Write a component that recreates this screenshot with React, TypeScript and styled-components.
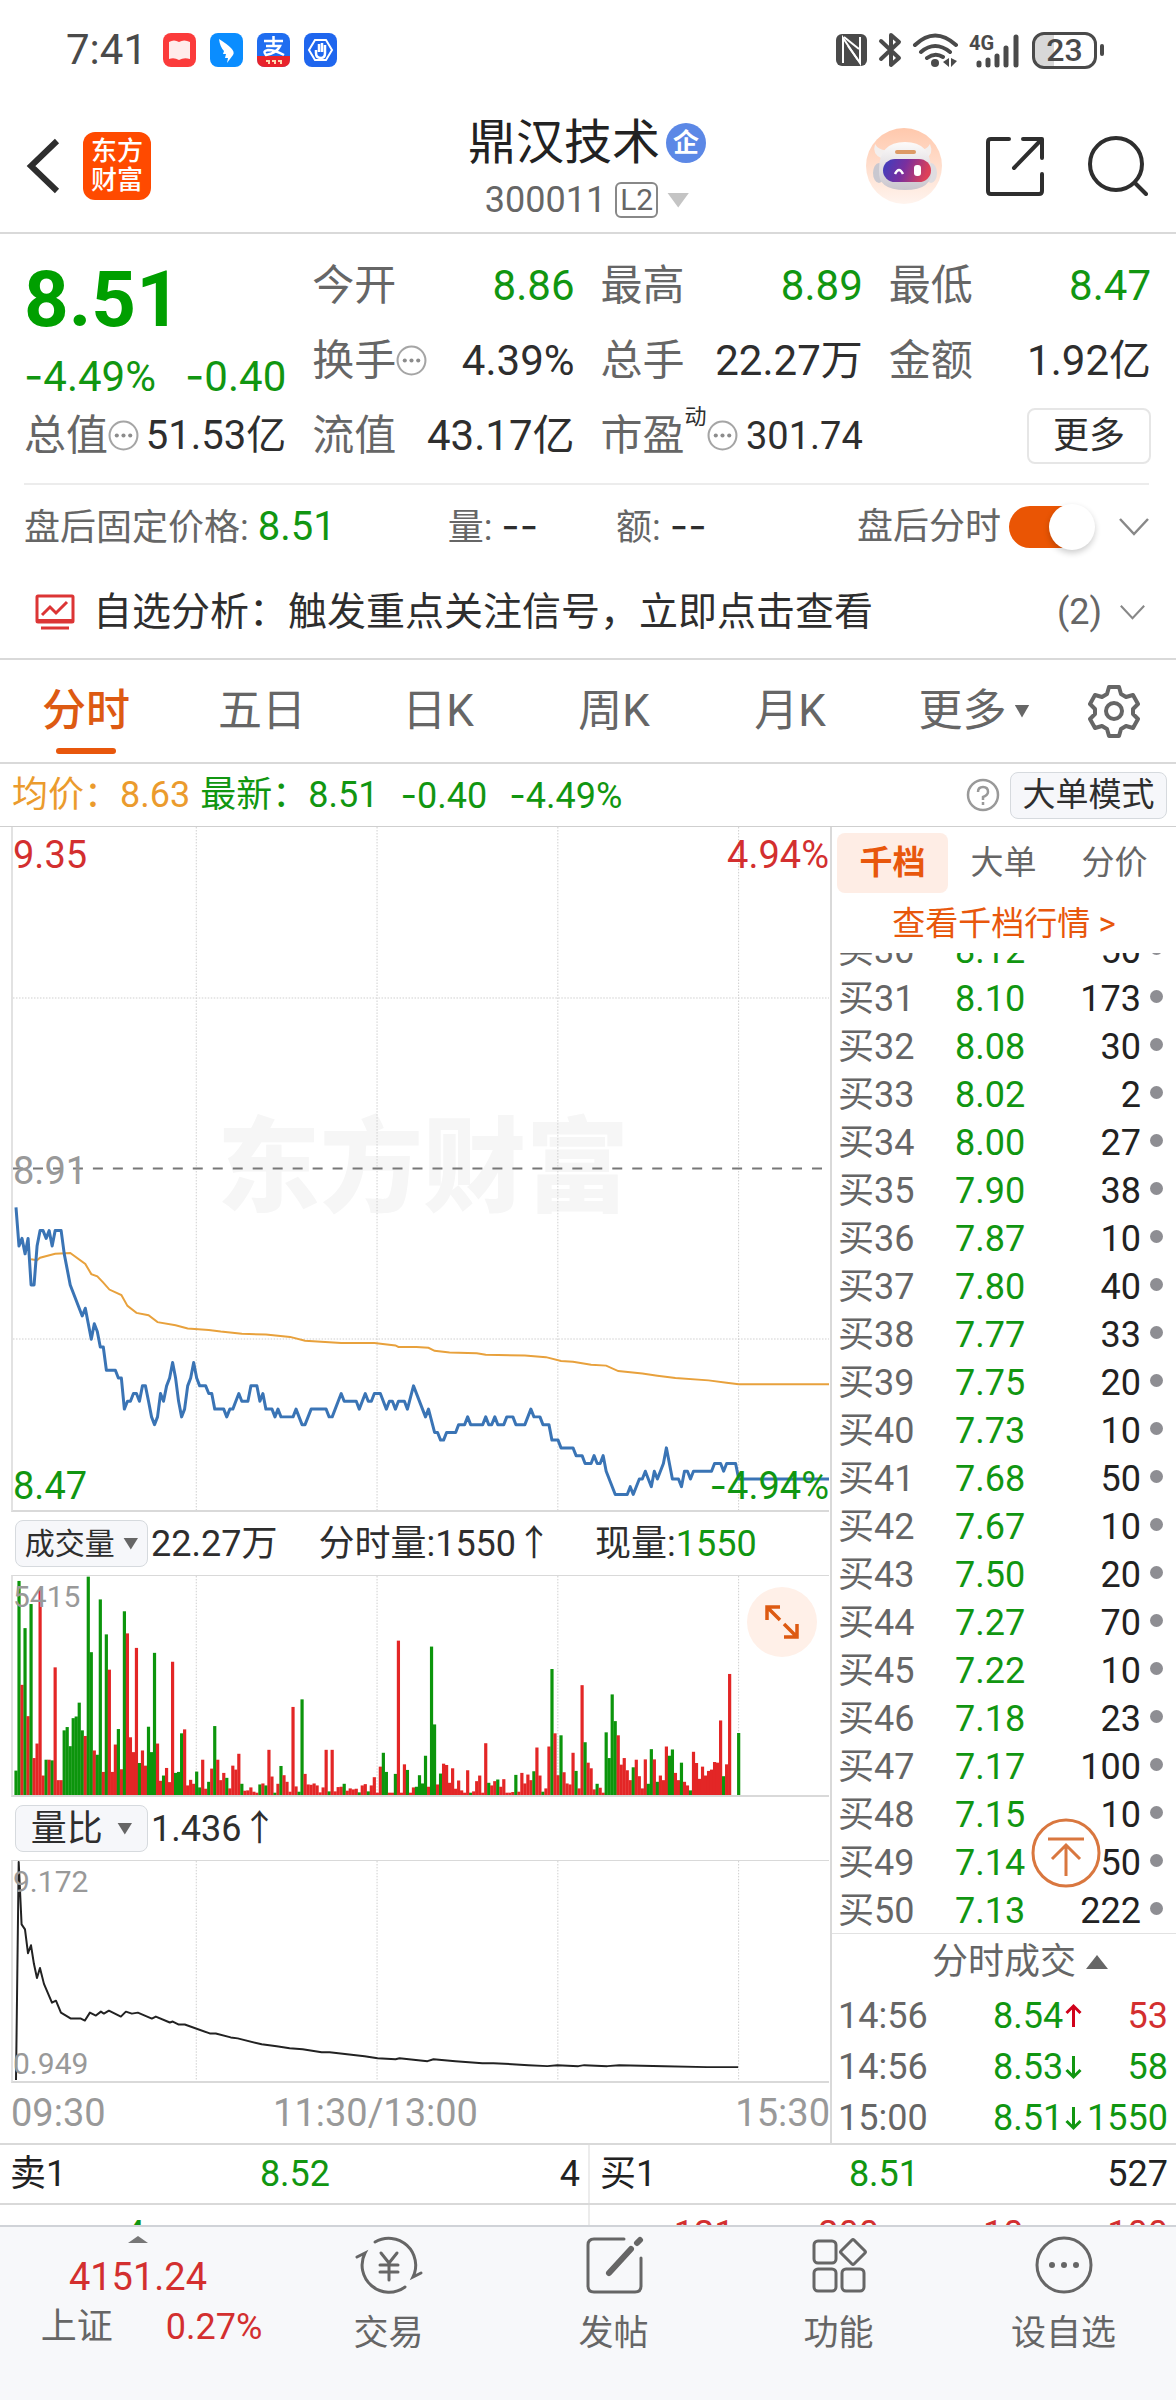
import React from "react";
import styled, { createGlobalStyle, css } from "styled-components";

const C = {
  red: "#d32f2f",
  green: "#119611",
  orange: "#e8570c",
  ink: "#2e2e2e",
  label: "#666666",
  faint: "#999999",
  line: "#d9d9d9",
  soft: "#ececec",
  pale: "#f6f7fa",
};

const GlobalStyle = createGlobalStyle`
  * { box-sizing: border-box; }
  body { margin: 0; background: #fff; }
  button, input { font: inherit; color: inherit; margin: 0; padding: 0; border: 0; background: none; }
  a { color: inherit; text-decoration: none; }
`;

const Page = styled.div`
  font-family: Roboto, "Noto Sans CJK SC", sans-serif;
  font-size: 36px;
  line-height: 48px;
  color: ${C.ink};
  white-space: nowrap;
  overflow: hidden;
`;

const Row = styled.div<{ $gap?: number }>`
  display: flex;
  align-items: center;
  gap: ${(p) => p.$gap ?? 0}px;
`;

const Tone = styled.span<{ $c: string }>`
  color: ${(p) => p.$c};
`;

const Sign = styled.span`
  font-family: Inter, sans-serif;
`;

/* ---------- system status bar ---------- */

const StatusBar = styled.div`
  display: flex;
  align-items: center;
  justify-content: space-between;
  height: 100px;
  padding: 0 72px 0 66px;
  color: #4a4a4a;
`;

const Clock = styled.span`
  font-size: 42px;
  margin-right: 2px;
`;

const Battery = styled.span`
  display: flex;
  align-items: center;
  justify-content: center;
  width: 65px;
  height: 37px;
  border: 3px solid #4a4a4a;
  border-radius: 12px;
  font-size: 32px;
  font-weight: 500;
  background: linear-gradient(90deg, #d8d8d8 32%, #fff 32%);
`;

const Nub = styled.span`
  width: 4px;
  height: 12px;
  border-radius: 2px;
  background: #4a4a4a;
`;

/* ---------- title bar ---------- */

const TitleBar = styled.header`
  display: grid;
  grid-template-columns: 1fr auto 1fr;
  align-items: center;
  height: 134px;
  padding: 0 28px 0 26px;
  border-bottom: 2px solid ${C.line};
`;

const IconButton = styled.button`
  display: flex;
  cursor: pointer;
`;

const Actions = styled.div`
  display: flex;
  align-items: center;
  justify-content: flex-end;
  gap: 44px;
`;

const Brand = styled.div`
  display: flex;
  flex-direction: column;
  align-items: center;
  justify-content: center;
  width: 68px;
  height: 68px;
  border-radius: 12px;
  background: #ff4a00;
  color: #fff;
  font-size: 26px;
  line-height: 29px;
  font-weight: 500;
`;

const Title = styled.div`
  padding-top: 5px;
`;

const Name = styled.h1`
  margin: 0;
  font-size: 48px;
  line-height: 60px;
  font-weight: 400;
  color: #222;
`;

const Code = styled.div`
  display: flex;
  align-items: center;
  justify-content: center;
  gap: 9px;
  margin-top: 3px;
  color: ${C.label};
`;

const Badge = styled.span`
  display: flex;
  align-items: center;
  justify-content: center;
  width: 40px;
  height: 40px;
  border-radius: 50%;
  background: #5c88e6;
  color: #fff;
  font-size: 26px;
  font-weight: 700;
`;

const Level = styled.span`
  padding: 0 3px;
  border: 2px solid #888;
  border-radius: 6px;
  font-size: 30px;
  line-height: 32px;
`;

const Triangle = styled.i<{ $w: number; $h: number; $c: string; $up?: boolean }>`
  flex: none;
  width: ${(p) => p.$w}px;
  height: ${(p) => p.$h}px;
  background: ${(p) => p.$c};
  clip-path: ${(p) => (p.$up ? "polygon(50% 0, 100% 100%, 0 100%)" : "polygon(0 0, 100% 0, 50% 100%)")};
`;

/* ---------- quote ---------- */

const Quote = styled.section`
  display: grid;
  grid-template-columns: repeat(4, minmax(0, 1fr));
  column-gap: 26px;
  grid-template-rows: 75px 75px 75px;
  padding: 14px 25px 10px 24px;
  font-size: 42px;
`;

const Headline = styled.div`
  grid-row: span 2;
  display: flex;
  flex-direction: column;
  justify-content: space-between;
  padding-bottom: 1px;
  color: ${C.green};
`;

const Price = styled.strong`
  font-size: 78px;
  line-height: 104px;
  font-weight: 700;
  color: #009f00;
`;

const Spread = styled.div`
  display: flex;
  align-items: center;
  justify-content: space-between;
`;

const Small = styled.span<{ $size: number }>`
  font-size: ${(p) => p.$size}px;
`;

const Super = styled.sup`
  align-self: flex-start;
  margin-top: -7px;
  font-size: 22px;
  line-height: 24px;
`;

const MoreButton = styled.button`
  margin-left: auto;
  width: 124px;
  height: 56px;
  border: 2px solid #e6e6e6;
  border-radius: 8px;
  font-size: 36px;
`;

const AfterHours = styled.section`
  display: flex;
  align-items: center;
  height: 86px;
  margin: 0 27px 0 24px;
  border-top: 2px solid ${C.soft};
  color: ${C.label};
`;

const Volume = styled.span`
  margin: 0 78px 0 112px;
`;

const Controls = styled.div`
  display: flex;
  align-items: center;
  gap: 26px;
  margin-left: auto;
`;

const Big = styled.span<{ $c?: string }>`
  font-size: 40px;
  color: ${(p) => p.$c ?? C.ink};
`;

const Switch = styled.input`
  appearance: none;
  position: relative;
  width: 84px;
  height: 42px;
  border-radius: 21px;
  background: #ea5504;
  &::before {
    content: "";
    position: absolute;
    right: -2px;
    top: -2px;
    width: 46px;
    height: 46px;
    border-radius: 50%;
    background: #fff;
    box-shadow: 0 3px 6px rgba(0, 0, 0, 0.2);
  }
`;

const SwitchLabel = styled.label`
  display: flex;
  align-items: center;
  gap: 8px;
`;

const Analysis = styled.section`
  display: flex;
  align-items: center;
  gap: 18px;
  height: 91px;
  padding: 0 31px 3px 35px;
  border-bottom: 2px solid ${C.line};
  font-size: 39px;
`;

const Count = styled.span`
  margin-left: auto;
  font-size: 36px;
  color: ${C.label};
`;

/* ---------- period tabs ---------- */

const Tabs = styled.nav`
  display: grid;
  grid-template-columns: repeat(6, 22fr) 15fr;
  height: 104px;
  border-bottom: 2px solid ${C.line};
`;

const Tab = styled.button<{ $on?: boolean; $menu?: boolean }>`
  position: relative;
  display: flex;
  align-items: center;
  justify-content: center;
  gap: 8px;
  padding: ${(p) => (p.$menu ? "0 0 0 12px" : "0 4px 0 0")};
  font-size: 44px;
  font-weight: ${(p) => (p.$on ? 500 : 400)};
  color: ${(p) => (p.$on ? "#dd5a12" : C.label)};
  ${(p) =>
    p.$on &&
    css`
      &::after {
        content: "";
        position: absolute;
        bottom: 8px;
        width: 60px;
        height: 6px;
        border-radius: 3px;
        background: ${C.orange};
      }
    `}
`;

const Averages = styled.div`
  display: flex;
  align-items: center;
  justify-content: space-between;
  height: 63px;
  padding: 0 9px 0 12px;
  border-bottom: 1px solid #cfcfcf;
`;

const Chip = styled.button<{ $w: number; $size: number }>`
  display: flex;
  align-items: center;
  justify-content: space-evenly;
  width: ${(p) => p.$w}px;
  height: 47px;
  border: 1px solid #d6dade;
  border-radius: 8px;
  background: ${C.pale};
  font-size: ${(p) => p.$size}px;
  line-height: 44px;
`;

/* ---------- charts ---------- */

const Main = styled.main`
  display: grid;
  grid-template-columns: minmax(0, 1fr) 346px;
  border-bottom: 2px solid ${C.line};
`;

const Charts = styled.section`
  padding-left: 11px;
`;

const Plot = styled.div<{ $h: number }>`
  position: relative;
  height: ${(p) => p.$h}px;
  margin-right: 1px;
  border-left: 2px solid #e2e2e2;
  border-bottom: 2px solid ${C.line};
  & > svg {
    position: relative;
    display: block;
    width: 100%;
    height: 100%;
  }
`;

const SubPlot = styled(Plot)`
  border-top: 1px solid ${C.line};
`;

const Mark = styled.span<{ $c: string; $v: "top" | "mid" | "low"; $right?: boolean; $sm?: boolean }>`
  position: absolute;
  color: ${(p) => p.$c};
  font-size: ${(p) => (p.$sm ? 30 : 38)}px;
  line-height: ${(p) => (p.$sm ? 38 : 52)}px;
  ${(p) => (p.$right ? "right: 0;" : "left: 0;")}
  ${(p) => p.$v === "top" && "top: 2px;"}
  ${(p) => p.$v === "low" && "bottom: -2px;"}
  ${(p) => p.$v === "mid" && "top: calc(50% - 24px);"}
`;

const Watermark = styled.span`
  position: absolute;
  left: 25%;
  top: 50%;
  transform: translateY(-50%);
  font-size: 103px;
  line-height: 120px;
  font-weight: 900;
  color: #f6f6f6;
`;

const PlotHead = styled.div`
  display: flex;
  align-items: center;
  height: 63px;
  padding-left: 4px;
`;

const Gap = styled.span<{ $w: number }>`
  width: ${(p) => p.$w}px;
`;

const Expand = styled.button`
  position: absolute;
  right: 12px;
  top: 11px;
  display: flex;
  align-items: center;
  justify-content: center;
  width: 70px;
  height: 70px;
  border-radius: 50%;
  background: #fff0e8;
`;

const Axis = styled.div`
  display: grid;
  grid-template-columns: 1fr auto 1fr;
  height: 59px;
  align-items: center;
  font-size: 38px;
  color: ${C.faint};
`;

const AxisMid = styled.span`
  margin-right: 90px;
`;

const AxisEnd = styled.span`
  text-align: right;
`;

/* ---------- order book ---------- */

const Side = styled.aside`
  position: relative;
  display: flex;
  flex-direction: column;
  border-left: 2px solid ${C.line};
`;

const SideTabs = styled.div`
  display: grid;
  grid-template-columns: repeat(3, 1fr);
  padding: 6px 6px 0 5px;
`;

const SideTab = styled.button<{ $on?: boolean }>`
  height: 60px;
  border-radius: 8px;
  font-size: 33px;
  font-weight: ${(p) => (p.$on ? 700 : 400)};
  color: ${(p) => (p.$on ? C.orange : C.label)};
  background: ${(p) => (p.$on ? "#feede5" : "transparent")};
`;

const DepthLink = styled.a`
  height: 60px;
  line-height: 61px;
  text-align: center;
  font-size: 33px;
  color: ${C.orange};
`;

const BookWindow = styled.div`
  height: 980px;
  overflow: hidden;
`;

const Book = styled.table`
  border-collapse: collapse;
  width: 100%;
  margin-top: -26px;
  table-layout: fixed;
  td {
    padding: 0;
    height: 48px;
    line-height: 48px;
  }
`;

const BookLabel = styled.td`
  width: 123px;
  && { padding-left: 6px; }
  color: ${C.label};
`;

const BookVol = styled.td`
  text-align: right;
  color: #222;
`;

const BookDot = styled.td`
  width: 35px;
  &::before {
    content: "";
    display: block;
    width: 13px;
    height: 13px;
    margin: 0 0 5px 9px;
    border-radius: 50%;
    background: #8e8e93;
  }
`;

const ToTop = styled.button`
  position: absolute;
  right: 75px;
  bottom: 255px;
  width: 70px;
  height: 70px;
`;

const TradesTitle = styled.button`
  display: flex;
  align-items: center;
  justify-content: center;
  gap: 10px;
  height: 57px;
  border-top: 1px solid #e2e2e2;
  padding-left: 32px;
  color: ${C.label};
`;

const Trades = styled.table`
  border-collapse: collapse;
  width: 100%;
  table-layout: fixed;
  td {
    padding: 0;
    height: 51px;
  }
`;

const TradeTime = styled.td`
  width: 161px;
  && { padding-left: 6px; }
  color: ${C.label};
`;

const TradePrice = styled.td`
  width: 90px;
  color: ${C.green};
`;

const TradeVol = styled.td<{ $c: string }>`
  && { padding-right: 8px; }
  direction: rtl;
  color: ${(p) => p.$c};
`;

/* ---------- best bid / ask ---------- */

const Best = styled.section`
  display: grid;
  grid-template-columns: 1fr 1fr;
  border-bottom: 2px solid ${C.line};
`;

const BestHalf = styled.div`
  display: grid;
  grid-template-columns: 1fr auto 1fr;
  height: 58px;
  align-items: center;
  padding: 0 8px 0 10px;
  color: #222;
  & + & { border-left: 2px solid ${C.soft}; }
`;

const End = styled.span`
  text-align: right;
`;

const Peek = styled.section`
  display: grid;
  grid-template-columns: 1fr 1fr;
  height: 20px;
  overflow: hidden;
  line-height: 58px;
`;

const PeekHalf = styled.div<{ $c: string }>`
  display: grid;
  grid-template-columns: repeat(4, 1fr);
  padding-right: 8px;
  text-align: right;
  color: ${(p) => p.$c};
  & + & { border-left: 2px solid ${C.soft}; }
`;

/* ---------- bottom bar ---------- */

const Footer = styled.footer`
  display: grid;
  grid-template-columns: 276fr repeat(4, 225fr);
  height: 178px;
  padding-top: 9px;
  border-top: 2px solid #d0d3d8;
  background: #f7f8fa;
`;

const Index = styled.div`
  display: flex;
  flex-direction: column;
  align-items: center;
`;

const IndexValue = styled.span`
  font-size: 38px;
  line-height: 50px;
  margin-top: 9px;
  color: ${C.red};
`;

const IndexLine = styled.div`
  display: flex;
  gap: 53px;
  margin-top: 1px;
  padding-left: 27px;
`;

const FootItem = styled.button`
  display: flex;
  flex-direction: column;
  align-items: center;
  height: 122px;
  justify-content: space-between;
  font-size: 35px;
  color: ${C.label};
`;

/* ---------- data ---------- */

const SLOTS = 271;
const W = 817;
const STEP = W / SLOTS;
const PRICE_H = 685;

/* [minute, price] at each turn of the line */
const PRICE: number[][] = [
  [0, 8.86], [1, 8.81], [2, 8.82], [3, 8.8], [4, 8.82], [5, 8.76], [6, 8.76], [7, 8.81], [8, 8.83], [9, 8.83],
  [10, 8.82], [11, 8.83], [12, 8.81], [13, 8.83], [15, 8.83], [16, 8.8], [18, 8.76], [22, 8.72], [23, 8.73],
  [24, 8.71], [25, 8.69], [26, 8.71], [27, 8.7], [28, 8.68], [29, 8.68], [30, 8.65], [33, 8.65], [34, 8.64],
  [35, 8.64], [36, 8.6], [37, 8.61], [38, 8.61], [39, 8.62], [40, 8.62], [41, 8.61], [42, 8.63], [43, 8.63],
  [44, 8.61], [45, 8.59], [46, 8.58], [47, 8.59], [48, 8.62], [49, 8.61], [50, 8.63], [51, 8.64], [52, 8.66],
  [53, 8.64], [54, 8.61], [55, 8.59], [56, 8.6], [57, 8.63], [58, 8.64], [59, 8.66], [60, 8.64], [61, 8.63],
  [63, 8.63], [64, 8.62], [65, 8.62], [66, 8.6], [69, 8.6], [70, 8.59], [71, 8.6], [72, 8.6], [73, 8.61],
  [74, 8.62], [75, 8.61], [77, 8.61], [78, 8.63], [80, 8.63], [81, 8.61], [82, 8.62], [83, 8.6], [85, 8.6],
  [86, 8.59], [87, 8.6], [88, 8.59], [92, 8.59], [93, 8.6], [95, 8.58], [96, 8.58], [98, 8.6], [103, 8.6],
  [104, 8.59], [105, 8.59], [108, 8.62], [109, 8.61], [113, 8.61], [114, 8.6], [116, 8.62], [117, 8.61],
  [118, 8.61], [119, 8.62], [121, 8.62], [123, 8.6], [124, 8.61], [125, 8.61], [126, 8.6], [127, 8.61],
  [129, 8.61], [130, 8.6], [132, 8.63], [136, 8.59], [137, 8.6], [139, 8.57], [140, 8.57], [141, 8.56],
  [142, 8.56], [143, 8.57], [146, 8.57], [147, 8.58], [149, 8.58], [150, 8.59], [151, 8.58], [155, 8.58],
  [156, 8.59], [157, 8.58], [158, 8.58], [159, 8.59], [160, 8.58], [162, 8.58], [163, 8.59], [165, 8.59],
  [166, 8.58], [169, 8.58], [171, 8.6], [172, 8.59], [174, 8.59], [175, 8.58], [177, 8.58], [178, 8.56],
  [180, 8.56], [181, 8.55], [185, 8.55], [186, 8.54], [188, 8.54], [189, 8.53], [191, 8.53], [192, 8.54],
  [193, 8.53], [194, 8.53], [195, 8.54], [196, 8.52], [199, 8.49], [203, 8.49], [204, 8.5], [205, 8.49],
  [207, 8.51], [208, 8.51], [209, 8.52], [211, 8.5], [212, 8.52], [213, 8.51], [215, 8.53], [216, 8.55],
  [218, 8.51], [220, 8.51], [221, 8.5], [222, 8.52], [223, 8.52], [224, 8.51], [225, 8.52], [231, 8.52],
  [232, 8.53], [234, 8.53], [235, 8.52], [236, 8.53], [239, 8.53], [240, 8.51], [270, 8.51],
];

const AVERAGE: number[][] = [
  [5, 8.793], [7, 8.792], [8, 8.795], [13, 8.8], [18, 8.801], [23, 8.787], [25, 8.774], [27, 8.771],
  [29, 8.763], [31, 8.754], [35, 8.747], [37, 8.733], [40, 8.724], [44, 8.721], [47, 8.712], [53, 8.708],
  [57, 8.704], [64, 8.702], [68, 8.7], [75, 8.697], [83, 8.696], [91, 8.693], [96, 8.688], [108, 8.685],
  [119, 8.685], [126, 8.682], [127, 8.68], [133, 8.68], [137, 8.679], [139, 8.675], [144, 8.673],
  [153, 8.672], [156, 8.67], [169, 8.669], [176, 8.667], [181, 8.662], [185, 8.661], [191, 8.657],
  [196, 8.656], [200, 8.649], [208, 8.646], [213, 8.643], [219, 8.64], [230, 8.637], [236, 8.634],
  [240, 8.632], [270, 8.632],
];

/* bar height per minute; negative where the price fell */
const VOLUME_MAX = 664;
const VOLUME = [
  -74, -649, 334, -506, 239, -579, 112, 156, 625, 59, -107, 107, -105, 387, 45, 45, -196, -206, -148, -233,
  -238, -280, -196, 179, -662, -433, 135, -122, -593, 70, -487, 380, 70, 153, -200, 78, -557, 490, 175, 130,
  446, -97, 135, 89, -207, -130, -431, 156, 43, -59, 82, 39, 404, -67, -70, -187, 199, 29, 46, 34,
  -71, -23, 107, 19, -40, 80, -209, 107, 45, 67, -52, 20, 89, 77, 125, -34, 13, 14, 23, 10,
  7, -32, 35, -29, 137, 56, -7, 34, -88, 60, 40, 10, 267, 26, -10, -290, 64, 32, 31, 35,
  29, 8, 23, 137, -11, 137, 11, 24, 25, -34, 13, 20, 17, 19, -8, 29, 33, -11, 29, 54,
  7, 86, -128, -70, 7, 7, -64, 468, 7, 93, -76, 7, 23, -25, -60, -35, -119, 25, -450, -214,
  32, -65, 95, 91, 37, 81, 19, 44, 14, 7, 75, -7, 11, 42, 59, 7, 157, -37, 29, 42,
  -47, 25, 48, 7, 7, 9, -61, 10, 67, 35, 62, 45, -72, 144, 59, -10, 20, 147, -382, 187,
  60, -181, 69, 35, 32, 128, -73, 20, 333, -160, 98, 81, 17, -34, 22, 7, -190, -112, -305, -224,
  181, 92, 112, 75, 45, -84, 107, 57, 20, 108, -34, -139, 108, -40, 59, 45, 147, -119, -138, 67,
  45, -98, 40, 29, -14, 131, 97, 49, 86, 59, 73, 77, 100, 98, 226, -57, 93, 367, 0, 0,
  -188,
];

const RATIO =
  "3,221 5.7,1 8.6,64 12,69 15,93 18,85 21,104 24,118 27,108 31,124 39,143 43,141 48,153 58,159 68,159 72,161 77,153 83,156 88,152 91,154 96,151 108,157 113,152 119,154 125,153 139,159 143,157 157,163 160,162 166,165 172,165 197,174 203,174 218,178 225,179 249,185 264,187 277,189 290,190 309,193 317,193 352,197 365,199 383,200 387,199 415,202 421,200 443,202 470,204 481,204 516,206 535,207 545,206 566,207 572,206 595,207 607,206 652,207 695,208 726,208";

const BIDS: [string, string, string][] = [
  ["买30", "8.12", "50"], ["买31", "8.10", "173"], ["买32", "8.08", "30"], ["买33", "8.02", "2"],
  ["买34", "8.00", "27"], ["买35", "7.90", "38"], ["买36", "7.87", "10"], ["买37", "7.80", "40"],
  ["买38", "7.77", "33"], ["买39", "7.75", "20"], ["买40", "7.73", "10"], ["买41", "7.68", "50"],
  ["买42", "7.67", "10"], ["买43", "7.50", "20"], ["买44", "7.27", "70"], ["买45", "7.22", "10"],
  ["买46", "7.18", "23"], ["买47", "7.17", "100"], ["买48", "7.15", "10"], ["买49", "7.14", "50"],
  ["买50", "7.13", "222"],
];

const TRADES = [
  { time: "14:56", price: "8.54", up: true, vol: "53" },
  { time: "14:56", price: "8.53", up: false, vol: "58" },
  { time: "15:00", price: "8.51", up: false, vol: "1550" },
];

const toPoints = (series: number[][]) =>
  series.map(([m, p]) => `${((m + 1) * STEP).toFixed(1)},${(((9.35 - p) / 0.88) * PRICE_H).toFixed(1)}`).join(" ");

/* ---------- drawings ---------- */

const AppIcons = () => (
  <svg width="174" height="34" viewBox="0 0 174 34" aria-hidden="true">
    <rect width="33" height="34" rx="8" fill="#fb3b3b" />
    <path d="M6 9q5-3 10 0q5-3 11 0v17q-6-2-11 1q-5-3-10-1z" fill="#ffeceb" />
    <rect x="47" width="33" height="34" rx="8" fill="#0a8dff" />
    <path d="M56 6q8 5 12 9q4 4 2 7l-6 8l1-5h-3l1-4h-3l1-3q-4-4-5-12z" fill="#fff" />
    <rect x="94" width="33" height="34" rx="8" fill="#1f6df0" />
    <path d="M94 23h33v3q0 8-8 8h-17q-8 0-8-8z" fill="#e8232b" />
    <path d="M101 8h19M110.500 3v10M103 13h14q-3 7-14 9q-4-4 2-5q7 0 16 5" fill="none" stroke="#fff" strokeWidth="2.500" />
    <path d="M103 28h3v3M109 28h3v3M115 28h3v3" stroke="#ffd9b0" strokeWidth="2" fill="none" />
    <rect x="141" width="33" height="34" rx="8" fill="#1f66ee" />
    <path d="M152 7h11l6 10l-6 10h-11l-6-10z" fill="none" stroke="#fff" strokeWidth="2" />
    <path d="M153 17v3q0 5 5 5q4 0 4-5v-8M156 19v-8M159 19v-9" stroke="#fff" strokeWidth="2.500" fill="none" />
  </svg>
);

const Signals = () => (
  <svg width="186" height="36" viewBox="0 0 186 36" aria-hidden="true" fill="none" stroke="#4a4a4a">
    <rect x="0" y="2" width="31" height="32" rx="6" fill="#4a4a4a" stroke="none" />
    <path d="M7 31V6l17 25V5" stroke="#fff" strokeWidth="2" />
    <path d="M12 14l10 14M8 5l15 12" stroke="#fff" strokeWidth="2" />
    <path d="M45 9l18 17l-8 7V3l8 7l-18 17" strokeWidth="4" strokeLinejoin="round" strokeLinecap="round" />
    <path d="M79 13q20-19 41 0M85 20q14-12 29 0M91 26q8-6 16-1" strokeWidth="4" strokeLinecap="round" />
    <circle cx="99" cy="31" r="4" fill="#4a4a4a" stroke="none" />
    <path d="M113 26v9l-6-5zM115 26v9l6-6z" fill="#4a4a4a" stroke="none" />
    <path d="M143 31v2M152 28v5M161 24v9M170 16v17M180 5v28" strokeWidth="5" strokeLinecap="round" />
    <text x="133" y="18" fontSize="20" fontWeight="700" fill="#4a4a4a" stroke="none" fontFamily="Roboto">4G</text>
  </svg>
);

const Robot = () => (
  <svg width="76" height="76" viewBox="0 0 76 76" aria-hidden="true">
    <defs>
      <linearGradient id="halo" x1="0" y1="0" x2="0" y2="1">
        <stop offset="0" stopColor="#ffc8ac" />
        <stop offset="1" stopColor="#fff4ee" />
      </linearGradient>
      <linearGradient id="visor" x1="0" y1="0" x2="1" y2="0.200">
        <stop offset="0" stopColor="#3a3fc0" />
        <stop offset="0.500" stopColor="#7a2f9e" />
        <stop offset="1" stopColor="#dd4058" />
      </linearGradient>
      <linearGradient id="shell" x1="0" y1="0" x2="0" y2="1">
        <stop offset="0" stopColor="#fdfbfa" />
        <stop offset="1" stopColor="#c9c5cd" />
      </linearGradient>
    </defs>
    <circle cx="38" cy="38" r="38" fill="url(#halo)" />
    <path d="M9 16q-3 10 6 14l7-8q-9 1-13-6zM64 16q4 10-4 14l-8-8q8 1 12-6z" fill="#f3efee" />
    <ellipse cx="13" cy="45" rx="6" ry="10" fill="#c9c8d0" />
    <ellipse cx="65" cy="45" rx="6" ry="10" fill="#dfdce0" />
    <path d="M13 42q0-28 26-28t26 28q2 20-26 20t-26-20z" fill="url(#shell)" />
    <rect x="29" y="22" width="21" height="4" rx="2" fill="#dd9a66" />
    <rect x="17" y="31" width="48" height="23" rx="12" fill="url(#visor)" />
    <path d="M29 46q4-8 8 0" stroke="#fff" strokeWidth="2.500" fill="none" />
    <rect x="48" y="37" width="7" height="11" rx="3" fill="#fff" />
  </svg>
);

const Share = () => (
  <svg width="58" height="60" viewBox="0 0 58 60" fill="none" stroke="#2e2e2e" strokeWidth="4" strokeLinecap="round" strokeLinejoin="round">
    <path d="M23 3H5q-3 0-3 3v49q0 3 3 3h48q3 0 3-3V38M37 3h19v19M55 4L28 32" />
  </svg>
);

const Search = () => (
  <svg width="60" height="60" viewBox="0 0 60 60" fill="none" stroke="#2e2e2e" strokeWidth="4" strokeLinecap="round">
    <circle cx="28" cy="28" r="26" />
    <path d="M47 47l11 11" />
  </svg>
);

const Info = () => (
  <svg width="31" height="31" viewBox="0 0 30 30" aria-hidden="true">
    <circle cx="15" cy="15" r="13.500" fill="none" stroke="#a5a5a5" strokeWidth="2" />
    <g fill="#8c8c8c">
      <circle cx="8.500" cy="15" r="2" />
      <circle cx="15" cy="15" r="2" />
      <circle cx="21.500" cy="15" r="2" />
    </g>
  </svg>
);

const Chevron = ({ w }: { w: number }) => (
  <svg width={w} height={w} viewBox="0 0 30 30" fill="none" stroke="#888" strokeWidth="2.500" aria-hidden="true">
    <path d="M1 7l14 15L29 7" />
  </svg>
);

const AnalysisIcon = () => (
  <svg width="40" height="38" viewBox="0 0 40 38" fill="none" stroke="#dc3535" strokeWidth="3" aria-hidden="true">
    <rect x="2" y="3" width="36" height="26" rx="1" />
    <path d="M7 22l8-8l6 6l11-11M6 35h28" />
    <path d="M2 28h36" strokeWidth="4" />
  </svg>
);

const Gear = () => (
  <svg width="52" height="54" viewBox="0 0 52 54" fill="none" stroke="#666" strokeWidth="4" strokeLinejoin="round">
    <path d="M21 3h10l2 7l5 3l7-2l5 9l-5 5v5l5 5l-5 9l-7-2l-5 3l-2 7H21l-2-7l-5-3l-7 2l-5-9l5-5v-5l-5-5l5-9l7 2l5-3z" />
    <circle cx="26" cy="27" r="8" />
  </svg>
);

const Help = () => (
  <svg width="34" height="34" viewBox="0 0 34 34" fill="none" stroke="#999" strokeWidth="2.500">
    <circle cx="17" cy="17" r="15" />
    <path d="M12 14q0-5 5-5t5 5q0 3-5 5v3M17 24v3" />
  </svg>
);

const Arrow = ({ up }: { up: boolean }) => (
  <svg width="17" height="26" viewBox="0 0 17 26" fill="none" stroke={up ? "#d0021b" : C.green} strokeWidth="3" aria-hidden="true">
    <path d={up ? "M8.500 24V3M1.500 10l7-7l7 7" : "M8.500 2v21M1.500 16l7 7l7-7"} />
  </svg>
);

const Guides = ({ h, rows = [] }: { h: number; rows?: number[] }) => (
  <g stroke="#cfcfcf" strokeWidth="1" strokeDasharray="1.500 1.500">
    {[183, 364, 545, 726].map((x) => (
      <path key={x} d={`M${x}.500 0V${h}`} />
    ))}
    {rows.map((y) => (
      <path key={y} d={`M0 ${y}.500H${W}`} />
    ))}
  </g>
);

const footIcon = { width: 60, height: 58, viewBox: "0 0 60 58", fill: "none", stroke: "#666", strokeWidth: 3 };

const TradeIcon = () => (
  <svg {...footIcon} overflow="visible" strokeLinecap="round">
    <path d="M16 6A27 27 0 0 1 54 41L62 37" />
    <path d="M46 51A27 27 0 0 1 6 17L-2 21" />
    <path d="M22 17l8 10l8-10M30 27v17M21 29h18M21 36h18" />
  </svg>
);

const PostIcon = () => (
  <svg {...footIcon} strokeLinecap="round">
    <path d="M40 3H10q-6 0-6 6v41q0 6 6 6h41q6 0 6-6V22" />
    <path d="M47 13L25 37" strokeWidth="6" />
    <path d="M53 7l3-3" strokeWidth="6" />
  </svg>
);

const GridIcon = () => (
  <svg {...footIcon}>
    <rect x="5" y="5" width="22" height="22" rx="4" />
    <rect x="5" y="33" width="22" height="22" rx="4" />
    <rect x="33" y="33" width="22" height="22" rx="4" />
    <path d="M43 4q1-1 2 0l11 11q1 1 0 2l-11 11q-1 1-2 0l-11-11q-1-1 0-2z" />
  </svg>
);

const DotsIcon = () => (
  <svg {...footIcon}>
    <circle cx="30" cy="29" r="27" />
    <g fill="#666" stroke="none">
      <circle cx="18" cy="29" r="3" />
      <circle cx="30" cy="29" r="3" />
      <circle cx="42" cy="29" r="3" />
    </g>
  </svg>
);

const FOOT = [
  { label: "交易", Icon: TradeIcon },
  { label: "发帖", Icon: PostIcon },
  { label: "功能", Icon: GridIcon },
  { label: "设自选", Icon: DotsIcon },
];

type StatProps = { label: string; value: string; color?: string; info?: boolean };

const Stat = ({ label, value, color = C.ink, info }: StatProps) => (
  <Spread>
    <Row>
      <Tone $c={C.label}>{label}</Tone>
      {info && <Info />}
    </Row>
    <Tone $c={color}>{value}</Tone>
  </Spread>
);

export default function App() {
  return (
    <Page>
      <GlobalStyle />
      <StatusBar>
        <Row $gap={14}>
          <Clock>7:41</Clock>
          <AppIcons />
        </Row>
        <Row $gap={3}>
          <Signals />
          <Gap $w={4} />
          <Battery>23</Battery>
          <Nub />
        </Row>
      </StatusBar>

      <TitleBar>
        <Row $gap={23}>
          <IconButton aria-label="返回">
            <svg width="34" height="56" viewBox="0 0 34 56" fill="none" stroke="#2e2e2e" strokeWidth="6">
              <path d="M31 3L5 28l26 25" />
            </svg>
          </IconButton>
          <Brand>
            <span>东方</span>
            <span>财富</span>
          </Brand>
        </Row>
        <Title>
          <Row $gap={6}>
            <Name>鼎汉技术</Name>
            <Badge>企</Badge>
          </Row>
          <Code>
            <span>300011</span>
            <Level>L2</Level>
            <Triangle $w={22} $h={15} $c="#c4c4c4" />
          </Code>
        </Title>
        <Actions>
          <Robot />
          <IconButton aria-label="分享"><Share /></IconButton>
          <IconButton aria-label="搜索"><Search /></IconButton>
        </Actions>
      </TitleBar>

      <Quote>
        <Headline>
          <Price>8.51</Price>
          <Spread>
            <span><Sign>-</Sign>4.49%</span>
            <span><Sign>-</Sign>0.40</span>
          </Spread>
        </Headline>
        <Stat label="今开" value="8.86" color={C.green} />
        <Stat label="最高" value="8.89" color={C.green} />
        <Stat label="最低" value="8.47" color={C.green} />
        <Stat label="换手" value="4.39%" info />
        <Stat label="总手" value="22.27万" />
        <Stat label="金额" value="1.92亿" />
        <Spread>
          <Row>
            <Tone $c={C.label}>总值</Tone>
            <Info />
          </Row>
          <Small $size={40}>51.53亿</Small>
        </Spread>
        <Stat label="流值" value="43.17亿" />
        <Spread>
          <Row>
            <Tone $c={C.label}>市盈</Tone>
            <Super>动</Super>
            <Info />
          </Row>
          <Small $size={38}>301.74</Small>
        </Spread>
        <Row>
          <MoreButton>更多</MoreButton>
        </Row>
      </Quote>

      <AfterHours>
        <span>
          盘后固定价格: <Big $c={C.green}>8.51</Big>
        </span>
        <Volume>
          量: <Big><Sign>--</Sign></Big>
        </Volume>
        <span>
          额: <Big><Sign>--</Sign></Big>
        </span>
        <Controls>
          <SwitchLabel>
            盘后分时
            <Switch type="checkbox" defaultChecked />
          </SwitchLabel>
          <Chevron w={30} />
        </Controls>
      </AfterHours>

      <Analysis>
        <AnalysisIcon />
        <span>自选分析：触发重点关注信号，立即点击查看</span>
        <Count>(2)</Count>
        <Chevron w={25} />
      </Analysis>

      <Tabs>
        <Tab $on>分时</Tab>
        <Tab>五日</Tab>
        <Tab>日K</Tab>
        <Tab>周K</Tab>
        <Tab>月K</Tab>
        <Tab $menu>
          更多
          <Triangle $w={15} $h={13} $c="#666" />
        </Tab>
        <Tab aria-label="设置"><Gear /></Tab>
      </Tabs>

      <Averages>
        <Row $gap={10}>
          <Tone $c="#eb9b2d">均价：8.63</Tone>
          <Row $gap={22}>
            <Tone $c={C.green}>最新：8.51</Tone>
            <Tone $c={C.green}><Sign>-</Sign>0.40</Tone>
            <Tone $c={C.green}><Sign>-</Sign>4.49%</Tone>
          </Row>
        </Row>
        <Row $gap={10}>
          <IconButton aria-label="帮助"><Help /></IconButton>
          <Chip $w={157} $size={33}>大单模式</Chip>
        </Row>
      </Averages>

      <Main>
        <Charts>
          <Plot $h={685}>
            <Watermark>东方财富</Watermark>
            <svg viewBox={`0 0 ${W} ${PRICE_H}`} preserveAspectRatio="none">
              <Guides h={PRICE_H} rows={[171, 513]} />
              <path d={`M0 342.500H${W}`} stroke="#777" strokeWidth="2" strokeDasharray="10 10" />
              <polyline points={toPoints(AVERAGE)} fill="none" stroke="#e8a13c" strokeWidth="2" />
              <polyline points={toPoints(PRICE)} fill="none" stroke="#3a74b5" strokeWidth="3" strokeLinejoin="round" />
            </svg>
            <Mark $c={C.red} $v="top">9.35</Mark>
            <Mark $c={C.red} $v="top" $right>4.94%</Mark>
            <Mark $c={C.faint} $v="mid">8.91</Mark>
            <Mark $c={C.green} $v="low">8.47</Mark>
            <Mark $c={C.green} $v="low" $right><Sign>-</Sign>4.94%</Mark>
          </Plot>

          <PlotHead>
            <Chip $w={133} $size={30}>
              成交量
              <Triangle $w={15} $h={12} $c="#666" />
            </Chip>
            <Gap $w={3} />
            <span>22.27万</span>
            <Gap $w={41} />
            <span>分时量:1550↑</span>
            <Gap $w={43} />
            <span>
              现量:<Tone $c={C.green}>1550</Tone>
            </span>
          </PlotHead>
          <SubPlot $h={222}>
            <svg viewBox={`0 0 ${W} 222`} preserveAspectRatio="none">
              <Guides h={222} />
              {VOLUME.map((v, i) => {
                const h = (Math.abs(v) / VOLUME_MAX) * 222;
                return (
                  <rect key={i} x={(i + 1) * STEP - 1.6} y={222 - h} width={3.2} height={h} fill={v < 0 ? "#0c950c" : "#e32626"} />
                );
              })}
            </svg>
            <Mark $c={C.faint} $v="top" $sm>5415</Mark>
            <Expand aria-label="展开">
              <svg width="36" height="36" viewBox="0 0 36 36" fill="none" stroke="#dd5a12" strokeWidth="3.500">
                <path d="M16 3H3v13M3 3l13 13M20 33h13V20M33 33L20 20" />
              </svg>
            </Expand>
          </SubPlot>

          <PlotHead>
            <Chip $w={133} $size={36}>
              量比
              <Triangle $w={15} $h={12} $c="#666" />
            </Chip>
            <Gap $w={3} />
            <span>1.436↑</span>
          </PlotHead>
          <SubPlot $h={223}>
            <svg viewBox={`0 0 ${W} 222`} preserveAspectRatio="none">
              <Guides h={222} />
              <polyline points={RATIO} fill="none" stroke="#222" strokeWidth="2" strokeLinejoin="round" />
            </svg>
            <Mark $c={C.faint} $v="top" $sm>9.172</Mark>
            <Mark $c={C.faint} $v="low" $sm>0.949</Mark>
          </SubPlot>

          <Axis>
            <span>09:30</span>
            <AxisMid>11:30/13:00</AxisMid>
            <AxisEnd>15:30</AxisEnd>
          </Axis>
        </Charts>

        <Side>
          <SideTabs>
            <SideTab $on>千档</SideTab>
            <SideTab>大单</SideTab>
            <SideTab>分价</SideTab>
          </SideTabs>
          <DepthLink href="#depth">查看千档行情 &gt;</DepthLink>
          <BookWindow>
            <Book>
              <tbody>
                {BIDS.map(([label, price, vol]) => (
                  <tr key={label}>
                    <BookLabel>{label}</BookLabel>
                    <td>
                      <Tone $c={C.green}>{price}</Tone>
                    </td>
                    <BookVol>{vol}</BookVol>
                    <BookDot />
                  </tr>
                ))}
              </tbody>
            </Book>
          </BookWindow>
          <ToTop aria-label="回到顶部">
            <svg width="70" height="70" viewBox="0 0 70 70" fill="none" stroke="#d9773f" strokeWidth="3">
              <circle cx="35" cy="35" r="33" />
              <path d="M17 21h36M35 58V27M21 41l14-14l14 14" />
            </svg>
          </ToTop>
          <TradesTitle>
            分时成交
            <Triangle $w={22} $h={14} $c="#666" $up />
          </TradesTitle>
          <Trades>
            <tbody>
              {TRADES.map((t) => (
                <tr key={t.price}>
                  <TradeTime>{t.time}</TradeTime>
                  <TradePrice>
                    <Row $gap={2}>
                      {t.price}
                      <Arrow up={t.up} />
                    </Row>
                  </TradePrice>
                  <TradeVol $c={t.up ? C.red : C.green}>{t.vol}</TradeVol>
                </tr>
              ))}
            </tbody>
          </Trades>
        </Side>
      </Main>

      <Best>
        <BestHalf>
          <span>卖1</span>
          <Tone $c={C.green}>8.52</Tone>
          <End>4</End>
        </BestHalf>
        <BestHalf>
          <span>买1</span>
          <Tone $c={C.green}>8.51</Tone>
          <End>527</End>
        </BestHalf>
      </Best>
      <Peek>
        <PeekHalf $c={C.green}>
          <span>4</span>
        </PeekHalf>
        <PeekHalf $c={C.red}>
          <span>121</span>
          <span>200</span>
          <span>10</span>
          <span>100</span>
        </PeekHalf>
      </Peek>

      <Footer>
        <Index>
          <Triangle $w={20} $h={7} $c="#777" $up />
          <IndexValue>4151.24</IndexValue>
          <IndexLine>
            <Tone $c={C.label}>上证</Tone>
            <Tone $c={C.red}>0.27%</Tone>
          </IndexLine>
        </Index>
        {FOOT.map(({ label, Icon }) => (
          <FootItem key={label}>
            <Icon />
            {label}
          </FootItem>
        ))}
      </Footer>
    </Page>
  );
}
